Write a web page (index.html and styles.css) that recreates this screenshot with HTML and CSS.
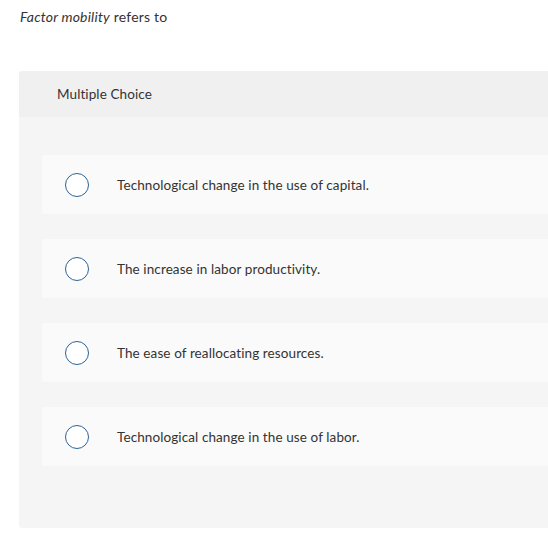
FILE: index.html
```html
<!DOCTYPE html>
<html lang="en">
<head>
  <meta charset="UTF-8">
  <title>Factor mobility</title>
  <link rel="stylesheet" href="styles.css">
</head>
<body>

<p class="question"><em>Factor mobility</em> refers to</p>

<div class="quiz">
  <div class="quiz-head">Multiple Choice</div>

  <div class="choices">
    <label class="choice">
      <span class="radio"></span>
      <span class="choice-text">Technological change in the use of capital.</span>
    </label>
    <label class="choice">
      <span class="radio"></span>
      <span class="choice-text">The increase in labor productivity.</span>
    </label>
    <label class="choice">
      <span class="radio"></span>
      <span class="choice-text">The ease of reallocating resources.</span>
    </label>
    <label class="choice">
      <span class="radio"></span>
      <span class="choice-text">Technological change in the use of labor.</span>
    </label>
  </div>
</div>

</body>
</html>
```

FILE: styles.css
```css
html, body {
  margin: 0;
  padding: 0;
  background: #fff;
  font-family: "Lato", "Liberation Sans", sans-serif;
  color: #333;
}

.question {
  font-size: 14px;
  letter-spacing: 0.2px;
  margin: 0;
  padding: 8px 0 0 20px;
  line-height: 17px;
}

.quiz {
  margin: 46px 0 0 19px;
  background-color: #f5f5f5;
  border-radius: 3px 0 0 3px;
  padding-bottom: 62px;
}

.quiz-head {
  background-color: #f0f0f0;
  height: 46px;
  line-height: 46px;
  padding-left: 38px;
  font-size: 13.5px;
  letter-spacing: 0.1px;
  border-radius: 3px 0 0 0;
}

.choices {
  padding: 38px 0 0 23px;
  display: flex;
  flex-direction: column;
  gap: 25px;
}

.choice {
  display: flex;
  align-items: center;
  height: 59px;
  background-color: #fafafa;
  border-radius: 3px 0 0 3px;
  font-size: 13.5px;
  letter-spacing: 0.1px;
  cursor: pointer;
}

.radio {
  width: 22px;
  height: 22px;
  border: 1.5px solid #2b6298;
  border-radius: 50%;
  background: #fff;
  margin-left: 23px;
  flex-shrink: 0;
}

.choice-text {
  margin-left: 28px;
}
```
